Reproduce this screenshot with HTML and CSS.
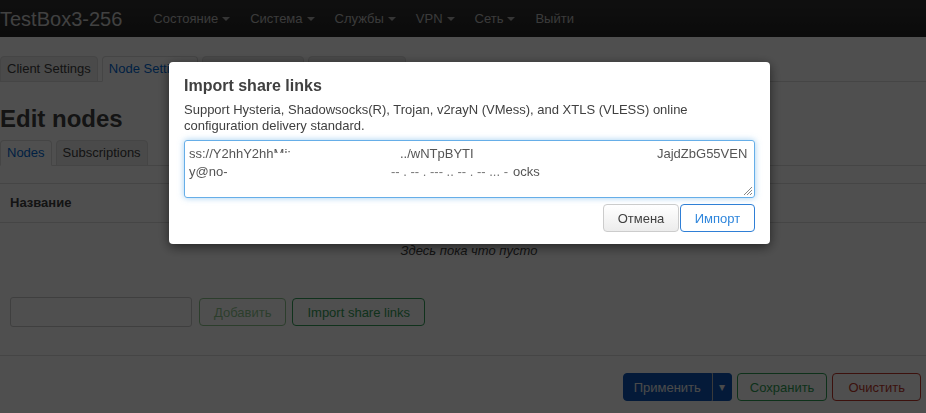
FILE: index.html
```html
<!DOCTYPE html>
<html lang="ru">
<head>
<meta charset="utf-8">
<title>Edit nodes</title>
<link rel="stylesheet" href="styles.css">
</head>
<body>
<header class="topbar">
  <a class="brand">TestBox3-256</a>
  <ul class="nav">
    <li><a>Состояние<span class="caret"></span></a></li>
    <li><a>Система<span class="caret"></span></a></li>
    <li><a>Службы<span class="caret"></span></a></li>
    <li><a>VPN<span class="caret"></span></a></li>
    <li><a>Сеть<span class="caret"></span></a></li>
    <li><a>Выйти</a></li>
  </ul>
</header>

<main class="page">
  <ul class="tabs top-tabs">
    <li><a>Client Settings</a></li>
    <li class="active"><a>Node Settings</a></li>
    <li><a>Server Settings</a></li>
    <li><a>Service Status</a></li>
  </ul>

  <h2 class="title">Edit nodes</h2>

  <ul class="tabs sub-tabs">
    <li class="active"><a>Nodes</a></li>
    <li><a>Subscriptions</a></li>
  </ul>

  <table class="table">
    <thead>
      <tr><th>Название</th></tr>
    </thead>
    <tbody>
      <tr><td class="empty">Здесь пока что пусто</td></tr>
    </tbody>
  </table>

  <div class="add-row">
    <input class="input" type="text">
    <button class="btn btn-add" disabled>Добавить</button>
    <button class="btn btn-import">Import share links</button>
  </div>

  <div class="page-actions">
    <div class="split">
      <button class="btn btn-apply">Применить</button>
      <button class="btn btn-apply btn-drop">▾</button>
    </div>
    <button class="btn btn-save">Сохранить</button>
    <button class="btn btn-reset">Очистить</button>
  </div>
</main>

<div class="overlay"></div>

<div class="modal">
  <h4 class="modal-title">Import share links</h4>
  <p class="modal-text">Support Hysteria, Shadowsocks(R), Trojan, v2rayN (VMess), and XTLS (VLESS) online configuration delivery standard.</p>
  <div class="textarea">
    <div class="ta-line">
      <span class="seg seg-a">ss://Y2hhY2hh<span class="frag-top"><span class="fi">Mi:</span></span></span>
      <span class="seg seg-b">../wNTpBYTI</span>
      <span class="seg">JajdZbG55VEN</span>
    </div>
    <div class="ta-line">
      <span class="seg seg-c">y@no-</span>
      <span class="frag-low"><span class="fi">-- . -- . --- .. -- . -- ... -</span></span>
      <span class="seg">ocks</span>
    </div>
    <svg class="grip" width="9" height="9" viewBox="0 0 9 9"><path d="M9 1L1 9M9 4L4 9M9 7L7 9" stroke="#888" stroke-width="1"/></svg>
  </div>
  <div class="modal-actions">
    <button class="btn btn-cancel">Отмена</button>
    <button class="btn btn-ok">Импорт</button>
  </div>
</div>
</body>
</html>
```
FILE: styles.css
```css
html, body {
  margin: 0;
  padding: 0;
}

body {
  font-family: "Liberation Sans", Arial, sans-serif;
  font-size: 13px;
  line-height: 18px;
  color: #404040;
  background: #fff;
  overflow: hidden;
}

/* top bar */
.topbar {
  height: 37px;
  background: linear-gradient(#333, #242424);
  display: flex;
  align-items: center;
}

.brand {
  font-size: 20px;
  line-height: 24px;
  color: #d0d0d0;
  margin-right: 21px;
}

.nav {
  display: flex;
  list-style: none;
  margin: 0;
  padding: 0;
}

.nav a {
  display: flex;
  align-items: center;
  padding: 0 10px;
  color: #bdbdbd;
  font-size: 13px;
}

.caret {
  display: inline-block;
  width: 0;
  height: 0;
  margin-left: 4px;
  border-top: 4px solid #aaa;
  border-left: 4px solid transparent;
  border-right: 4px solid transparent;
}

/* tabs */
.tabs {
  display: flex;
  gap: 4px;
  list-style: none;
  margin: 0;
  padding: 0;
  border-bottom: 1px solid #ddd;
}

.top-tabs {
  margin-top: 19px;
}

.tabs li {
  margin-bottom: -1px;
}

.tabs a {
  display: block;
  padding: 4px 6px;
  line-height: 16px;
  border: 1px solid #ddd;
  border-radius: 4px 4px 0 0;
  color: #404040;
  background: #eee;
}

.tabs .active a {
  background: #fff;
  border-bottom-color: #fff;
  color: #0069d6;
}

.title {
  margin: 22px 0 6px;
  font-size: 24px;
  line-height: 30px;
  font-weight: bold;
  color: #404040;
}

/* table */
.table {
  width: 100%;
  margin-top: 17px;
  border-collapse: collapse;
  border-top: 1px solid #ddd;
}

.table th {
  text-align: left;
  padding: 10px;
  line-height: 18px;
  border-bottom: 1px solid #ddd;
  font-weight: bold;
}

.table .empty {
  text-align: center;
  font-style: italic;
  padding: 19px 10px 20px 22px;
}

/* buttons */
.btn {
  font-family: inherit;
  font-size: 13px;
  height: 28px;
  padding: 0 14px;
  border: 1px solid #ccc;
  border-radius: 4px;
  background: #fff;
  color: #404040;
  cursor: pointer;
  box-sizing: border-box;
}

.add-row {
  display: flex;
  align-items: center;
  margin-top: 17px;
  padding-left: 10px;
}

.input {
  width: 182px;
  height: 30px;
  box-sizing: border-box;
  border: 1px solid #ccc;
  border-radius: 3px;
  margin-right: 7px;
}

.btn-add {
  color: #46a546;
  border-color: #46a546;
  opacity: .6;
  margin-right: 6px;
}

.btn-import {
  color: #35a05a;
  border-color: #35a05a;
}

.page-actions {
  margin-top: 28px;
  border-top: 1px solid #ddd;
  padding: 17px 5px 0 0;
  display: flex;
  justify-content: flex-end;
  gap: 5px;
}

.split {
  display: flex;
}

.btn-apply {
  background: #0d55b8;
  border-color: #0d55b8;
  color: #eee;
  padding: 0 10px;
  border-radius: 4px 0 0 4px;
}

.btn-drop {
  border-radius: 0 4px 4px 0;
  border-left: 1px solid #bbb;
  padding: 0 5px;
  width: 20px;
  font-size: 12px;
}

.btn-save {
  color: #2f9e55;
  border-color: #2f9e55;
  padding: 0 12px;
}

.btn-reset {
  color: #c0392b;
  border-color: #c0392b;
  padding: 0 15px;
}

/* overlay + modal */
.overlay {
  position: fixed;
  inset: 0;
  background: rgba(0, 0, 0, .69);
}

.modal {
  position: fixed;
  left: 169px;
  top: 62px;
  width: 601px;
  box-sizing: border-box;
  padding: 15px 15px 12px;
  background: #fff;
  border-radius: 4px;
  box-shadow: 0 3px 12px rgba(0, 0, 0, .55);
}

.modal-title {
  margin: 0 0 7px;
  font-size: 16px;
  line-height: 18px;
  font-weight: bold;
  color: #404040;
}

.modal-text {
  margin: 0 0 6px;
  line-height: 16px;
  color: #404040;
}

.textarea {
  position: relative;
  height: 58px;
  box-sizing: border-box;
  padding: 4px;
  border: 1px solid #66aee8;
  border-radius: 3px;
  box-shadow: 0 0 6px rgba(102, 175, 233, .6);
  color: #555;
}

.ta-line {
  display: flex;
  align-items: flex-start;
  white-space: nowrap;
  height: 18px;
}

.seg {
  display: block;
  overflow: hidden;
}

.seg-a { width: 211px; }
.seg-b { width: 257px; }
.seg-c { width: 202px; }

.frag-top {
  display: inline-block;
  height: 8px;
  overflow: hidden;
  vertical-align: top;
}

.frag-top .fi {
  display: block;
}

.frag-low {
  display: block;
  width: 122px;
  height: 18px;
  overflow: hidden;
  color: #777;
}

.frag-low .fi {
  display: block;
  line-height: 18px;
}

.grip {
  position: absolute;
  right: 2px;
  bottom: 2px;
}

.modal-actions {
  display: flex;
  justify-content: flex-end;
  gap: 1px;
  margin-top: 6px;
}

.btn-cancel {
  width: 76px;
  padding: 0;
  background: linear-gradient(#fff, #ececec);
  border-color: #ccc;
}

.btn-ok {
  width: 75px;
  padding: 0;
  color: #2f86dc;
  border-color: #2f7fd6;
}
```
